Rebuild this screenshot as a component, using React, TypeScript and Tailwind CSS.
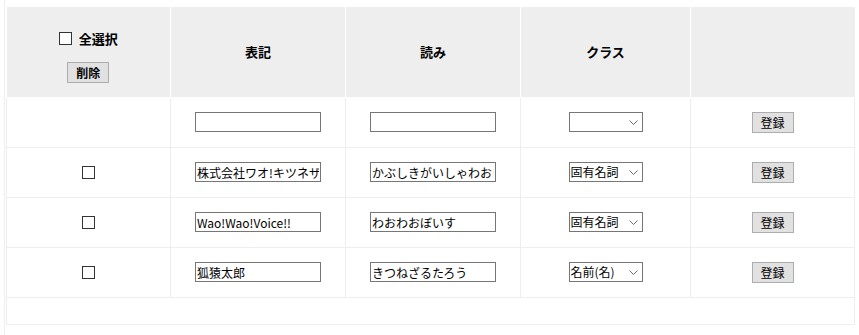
import React from 'react';

type Entry = { surface: string; reading: string; cls: string };

const entries: Entry[] = [
  { surface: '株式会社ワオ!キツネザル', reading: 'かぶしきがいしゃわおきつねざる', cls: '固有名詞' },
  { surface: 'Wao!Wao!Voice!!', reading: 'わおわおぼいす', cls: '固有名詞' },
  { surface: '狐猿太郎', reading: 'きつねざるたろう', cls: '名前(名)' },
];

const font = { fontFamily: '"Noto Sans CJK JP", "Noto Sans", sans-serif' };

function Checkbox() {
  return (
    <input
      type="checkbox"
      className="appearance-none block w-[13px] h-[13px] border border-[#333] bg-white m-0"
    />
  );
}

function TextBox({ value }: { value: string }) {
  return (
    <input
      type="text"
      defaultValue={value}
      className="block w-[126px] h-[20px] border border-[#767676] bg-white px-[1px] text-[12px] leading-[18px] text-black outline-none"
      style={font}
    />
  );
}

function ClassSelect({ value }: { value: string }) {
  return (
    <div className="relative">
      <select
        defaultValue={value}
        className="block appearance-none w-[74px] h-[20px] border border-[#767676] bg-white pl-[1px] pr-[16px] text-[12px] leading-[18px] text-black outline-none"
        style={font}
      >
        <option value=""></option>
        <option value="固有名詞">固有名詞</option>
        <option value="名前(名)">名前(名)</option>
        <option value="名前(姓)">名前(姓)</option>
        <option value="一般名詞">一般名詞</option>
      </select>
      <svg
        className="pointer-events-none absolute right-[5px] top-[8px]"
        width="9"
        height="5"
        viewBox="0 0 9 5"
        fill="none"
        stroke="#6b6b6b"
        strokeWidth="1"
      >
        <path d="M0.5 0.5 L4.5 4.5 L8.5 0.5" />
      </svg>
    </div>
  );
}

function SmallButton({ label }: { label: string }) {
  return (
    <button
      type="button"
      className="block w-[42px] h-[21px] border border-[#adadad] bg-[#e1e1e1] text-[12px] leading-[19px] text-black"
      style={font}
    >
      {label}
    </button>
  );
}

function Cell({ children }: { children?: React.ReactNode }) {
  return (
    <td className="border border-[#eee] p-0">
      <div className="flex items-center justify-center">{children}</div>
    </td>
  );
}

export default function App() {
  return (
    <div className="min-h-screen bg-white ml-[4px] border-l border-[#eee] pt-[7px]" style={font}>
      <table className="ml-[1px] w-[848px] table-fixed border-collapse text-black">
        <colgroup>
          <col className="w-[164px]" />
          <col className="w-[175px]" />
          <col className="w-[175px]" />
          <col className="w-[170px]" />
          <col className="w-[164px]" />
        </colgroup>
        <thead>
          <tr className="h-[90px]">
            <th className="bg-[#eee] border-r border-b border-white align-middle p-0 pt-[8px]">
              <div className="flex items-center justify-center gap-[7px] h-[20px] text-[13px] font-bold">
                <Checkbox />
                <span>全選択</span>
              </div>
              <div className="mt-[13px] flex justify-center">
                <SmallButton label="削除" />
              </div>
            </th>
            <th className="bg-[#eee] border-r border-b border-white text-[13px] font-bold">表記</th>
            <th className="bg-[#eee] border-r border-b border-white text-[13px] font-bold">読み</th>
            <th className="bg-[#eee] border-r border-b border-white text-[13px] font-bold">クラス</th>
            <th className="bg-[#eee] border-b border-white"></th>
          </tr>
        </thead>
        <tbody>
          <tr className="h-[50px]">
            <Cell />
            <Cell>
              <TextBox value="" />
            </Cell>
            <Cell>
              <TextBox value="" />
            </Cell>
            <Cell>
              <ClassSelect value="" />
            </Cell>
            <Cell>
              <SmallButton label="登録" />
            </Cell>
          </tr>
          {entries.map((e) => (
            <tr key={e.surface} className="h-[50px]">
              <Cell>
                <Checkbox />
              </Cell>
              <Cell>
                <TextBox value={e.surface} />
              </Cell>
              <Cell>
                <TextBox value={e.reading} />
              </Cell>
              <Cell>
                <ClassSelect value={e.cls} />
              </Cell>
              <Cell>
                <SmallButton label="登録" />
              </Cell>
            </tr>
          ))}
          <tr className="h-[27px]">
            <td colSpan={5} className="border border-[#eee]"></td>
          </tr>
        </tbody>
      </table>
    </div>
  );
}
